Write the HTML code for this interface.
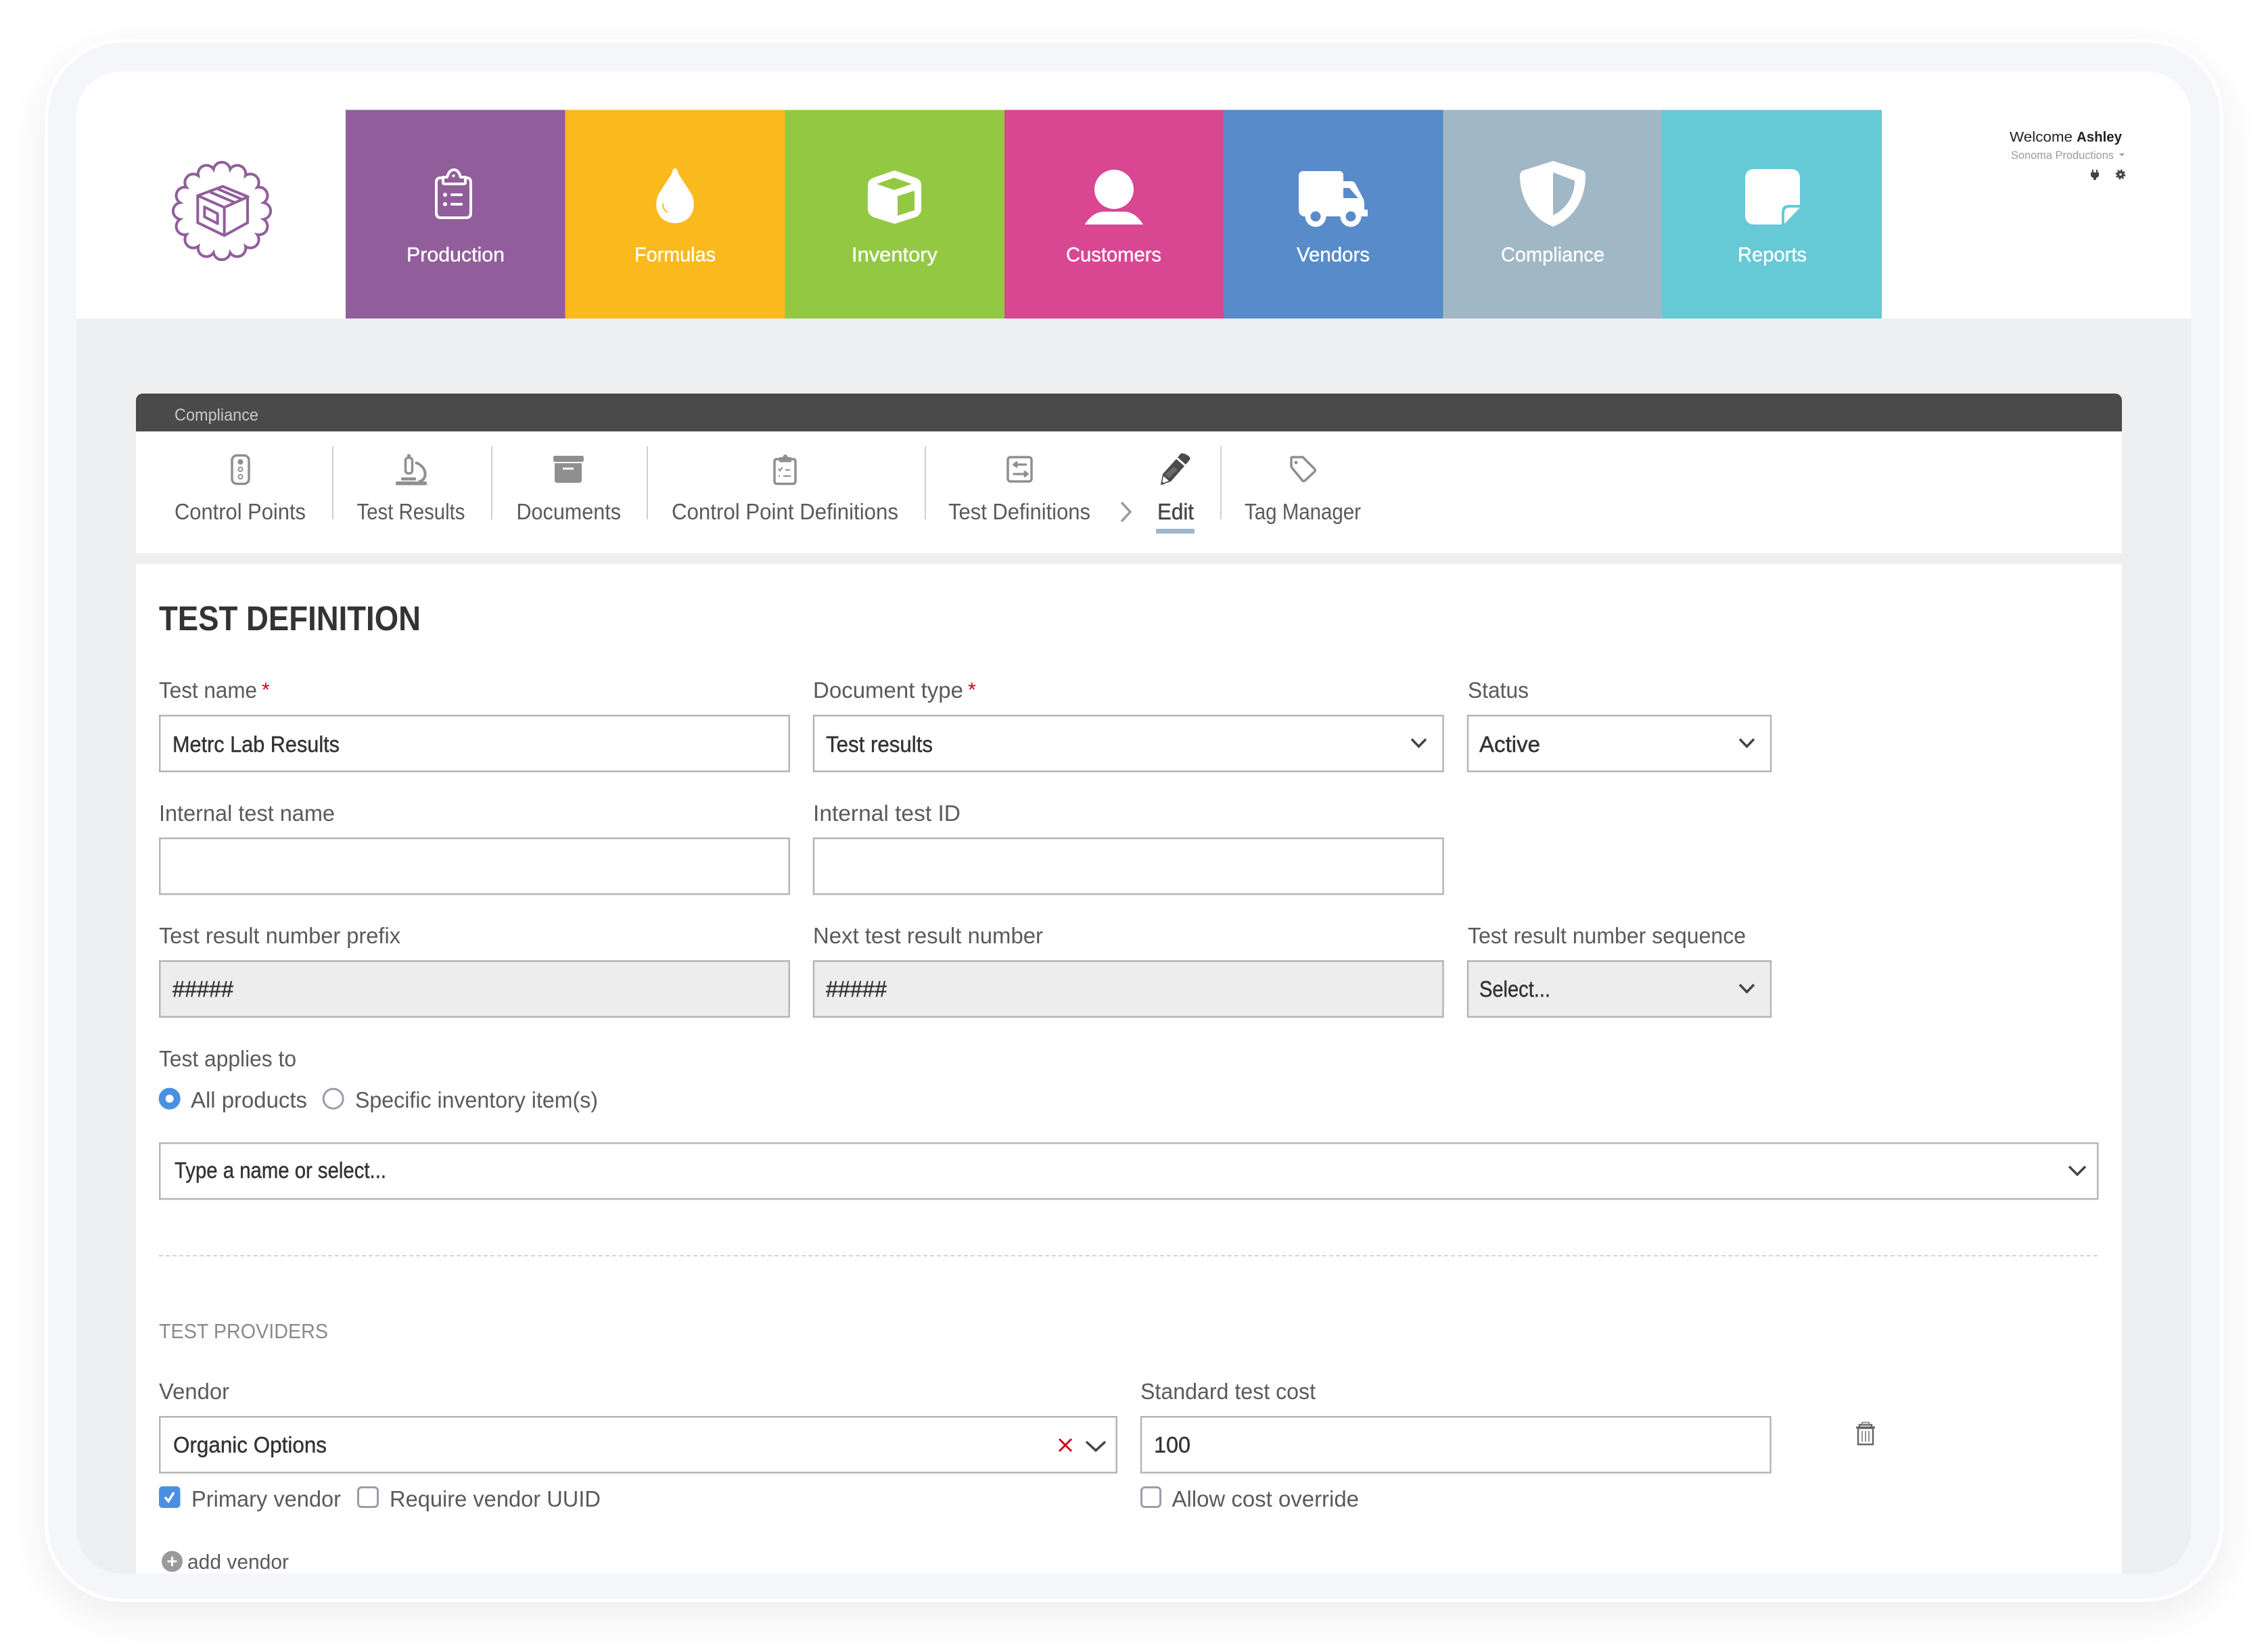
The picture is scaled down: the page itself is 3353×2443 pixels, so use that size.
<!DOCTYPE html>
<html><head><meta charset="utf-8"><title>Test Definition</title>
<style>
html,body{margin:0;padding:0;background:#fff;width:3353px;height:2443px;overflow:hidden}
#f{position:absolute;left:66px;top:58px;width:3211px;height:2301px;border:5px solid #fff;border-radius:115px;background:#f4f6fa;box-shadow:0 20px 60px rgba(0,0,0,.075)}
svg{position:absolute;left:0;top:0}
text{font-family:"Liberation Sans",sans-serif;font-size:33px;fill:#5a5a5a}
.n{font-size:30px;fill:#fff;stroke:#fff;stroke-width:.4;text-anchor:start}
.v{fill:#333;stroke:#333;stroke-width:.45}
.i{fill:none;stroke:#8f8f8f;stroke-width:3.5;stroke-linejoin:round;stroke-linecap:round}
.g{fill:#8f8f8f}
.c{fill:none;stroke:#444;stroke-width:3.5}
.b{fill:#fff;stroke:#b5b5b5;stroke-width:2.5}
.d{fill:#ededed;stroke:#b5b5b5;stroke-width:2.5}
</style></head><body>
<div id="f"></div>
<svg width="3353" height="2443" viewBox="0 0 3353 2443" xmlns="http://www.w3.org/2000/svg">
<!-- screen -->
<path d="M113 471V171a65 65 0 0 1 65-65H3174a65 65 0 0 1 65 65V471Z" fill="#fff"/>
<path d="M113 471H3239V2262a65 65 0 0 1-65 65H178a65 65 0 0 1-65-65Z" fill="#eeeff1"/>

<!-- logo -->
<g transform="translate(328 312)" fill="none" stroke="#915e9b" stroke-width="4">
<path d="M12.3-61.8A12.5 12.5 0 0 1 35-52.4A12.5 12.5 0 0 1 52.4-35A12.5 12.5 0 0 1 61.8-12.3A12.5 12.5 0 0 1 61.8 12.3A12.5 12.5 0 0 1 52.4 35A12.5 12.5 0 0 1 35 52.4A12.5 12.5 0 0 1 12.3 61.8A12.5 12.5 0 0 1-12.3 61.8A12.5 12.5 0 0 1-35 52.4A12.5 12.5 0 0 1-52.4 35A12.5 12.5 0 0 1-61.8 12.3A12.5 12.5 0 0 1-61.8-12.3A12.5 12.5 0 0 1-52.4-35A12.5 12.5 0 0 1-35-52.4A12.5 12.5 0 0 1-12.3-61.8A12.5 12.5 0 0 1 12.3-61.8Z"/>
</g>
<g transform="translate(220 210) scale(.3333)" fill="none" stroke="#915e9b" stroke-width="12" stroke-linejoin="round">
<path d="M328 197L440 243L335 290L217 238Z"/>
<path d="M217 238V358L335 415L438 358V243M335 290V415"/>
<path d="M272 222L380 268M305 208L415 255"/>
<path d="M247 288L305 318V362L247 332Z"/>
</g>

<!-- main nav -->
<rect x="511" y="162.5" width="324.5" height="308.5" fill="#915e9b"/>
<rect x="835.5" y="162.5" width="325" height="308.5" fill="#fab91c"/>
<rect x="1160.5" y="162.5" width="324.5" height="308.5" fill="#93c942"/>
<rect x="1485" y="162.5" width="324" height="308.5" fill="#d94692"/>
<rect x="1809" y="162.5" width="324.5" height="308.5" fill="#578bc9"/>
<rect x="2133.5" y="162.5" width="323.5" height="308.5" fill="#a0b7c6"/>
<rect x="2457" y="162.5" width="325" height="308.5" fill="#66c9d6"/>
<text class="n" x="601" y="386.5" textLength="145" lengthAdjust="spacingAndGlyphs">Production</text>
<text class="n" x="938" y="386.5" textLength="120" lengthAdjust="spacingAndGlyphs">Formulas</text>
<text class="n" x="1259" y="386.5" textLength="127" lengthAdjust="spacingAndGlyphs">Inventory</text>
<text class="n" x="1576" y="386.5" textLength="141" lengthAdjust="spacingAndGlyphs">Customers</text>
<text class="n" x="1917" y="386.5" textLength="108" lengthAdjust="spacingAndGlyphs">Vendors</text>
<text class="n" x="2219" y="386.5" textLength="153" lengthAdjust="spacingAndGlyphs">Compliance</text>
<text class="n" x="2569" y="386.5" textLength="102" lengthAdjust="spacingAndGlyphs">Reports</text>

<!-- production icon -->
<g fill="none" stroke="#fff" stroke-width="4" stroke-linejoin="round">
<path d="M655 263H651Q645 263 645 270V315Q645 322 652 322H689Q696 322 696 315V270Q696 263 690 263H688"/>
<path d="M655 262V270Q655 272 658 272H685Q688 272 688 270V262H681Q678 251 671 251Q664 251 661 262Z"/>
</g>
<circle cx="670.500" cy="260" r="2" fill="#fff"/>
<g fill="#fff"><circle cx="658" cy="288" r="3"/><circle cx="658" cy="302" r="3"/><rect x="666" y="286" width="18" height="4" rx="2"/><rect x="666" y="300" width="18" height="4" rx="2"/></g>
<!-- drop -->
<path d="M998 249C1001 249 1002 253 1003 257L1023 288C1032 312 1018 330 998 330C978 330 964 312 973 288L993 257C994 253 995 249 998 249Z" fill="#fff"/>
<path d="M980 301C980 308 983 312 987 314" fill="none" stroke="#fab91c" stroke-width="2"/>
<!-- inventory -->
<path d="M1322.500 252L1354 263Q1362 266 1362 274V309Q1362 317 1354 321L1322.500 331L1291 321Q1283 317 1283 309V274Q1283 266 1291 263Z" fill="#fff"/>
<path d="M1322 262.700L1348 272L1322 281L1296 272Z" fill="#93c942"/>
<path d="M1327 290L1352 282V311L1327 319Z" fill="#93c942"/>
<!-- customer -->
<circle cx="1647" cy="280" r="29" fill="#fff"/>
<path d="M1603.500 332Q1616 313 1632 313H1662Q1678 313 1690 332Z" fill="#fff"/>
<!-- truck -->
<path d="M1920 260Q1920 253 1927 253H1980Q1986 253 1986 260V268H1998Q2002 268 2004 272L2014 291Q2017 296 2017 302V310H2022V320H1930Q1920 320 1920 310Z" fill="#fff"/>
<path d="M1986 278H1995L2008 293H1986Z" fill="#578bc9"/>
<circle cx="1945" cy="320" r="15.500" fill="#fff"/><circle cx="1945" cy="320" r="7.500" fill="#578bc9"/>
<circle cx="1997" cy="320" r="15.500" fill="#fff"/><circle cx="1997" cy="320" r="7.500" fill="#578bc9"/>
<!-- shield -->
<path d="M2296 238L2340 252Q2344 254 2344 260C2344 290 2330 322 2296 335C2262 322 2247 290 2247 260Q2247 254 2252 252Z" fill="#fff"/>
<path d="M2296 255L2328 267C2328 290 2315 310 2296 318Z" fill="#a0b7c6"/>
<!-- reports -->
<path d="M2594 250H2647Q2661 250 2661 264V303H2645Q2634 303 2634 314V332H2594Q2580 332 2580 318V264Q2580 250 2594 250Z" fill="#fff"/>
<path d="M2645 307H2661L2638 331V316Q2638 307 2645 307Z" fill="#fff"/>

<!-- welcome -->
<text x="2971" y="209.500" style="font-size:21px;fill:#222" textLength="93" lengthAdjust="spacingAndGlyphs">Welcome</text>
<text x="3070" y="209.500" style="font-size:21px;fill:#222;font-weight:bold" textLength="67" lengthAdjust="spacingAndGlyphs">Ashley</text>
<text x="2973" y="235" style="font-size:17px;fill:#9a9a9a" textLength="152" lengthAdjust="spacingAndGlyphs">Sonoma Productions</text>
<path d="M3133 227H3141L3137 231Z" fill="#9a9a9a"/>
<path d="M3094 251V256M3100 251V256" stroke="#444" stroke-width="2"/>
<path d="M3091 255H3103V259Q3103 262 3099 263V266H3095V263Q3091 262 3091 259Z" fill="#444"/>
<circle cx="3135" cy="258" r="5.500" fill="#444"/>
<circle cx="3135" cy="258" r="6.500" fill="none" stroke="#444" stroke-width="1.800" stroke-dasharray="2.600 2.500"/>
<circle cx="3135" cy="258" r="1.800" fill="#fff"/>

<!-- dark bar + tabs panel -->
<path d="M201 638V592a10 10 0 0 1 10-10H3127a10 10 0 0 1 10 10V638Z" fill="#4a4a4a"/>
<text x="258" y="622" style="font-size:25px;fill:#c8c8c8" textLength="124" lengthAdjust="spacingAndGlyphs">Compliance</text>
<rect x="201" y="638" width="2936" height="180" fill="#fff"/>
<rect x="201" y="834" width="2936" height="1493" fill="#fff"/>

<!-- tab dividers -->
<g fill="#cfcfcf"><rect x="491" y="660" width="2" height="108"/><rect x="726" y="660" width="2" height="108"/><rect x="956" y="660" width="2" height="108"/><rect x="1367" y="660" width="2" height="108"/><rect x="1804" y="660" width="2" height="108"/></g>
<text x="258" y="768" textLength="194" lengthAdjust="spacingAndGlyphs">Control Points</text>
<text x="527.500" y="768" textLength="160" lengthAdjust="spacingAndGlyphs">Test Results</text>
<text x="763.500" y="768" textLength="154.500" lengthAdjust="spacingAndGlyphs">Documents</text>
<text x="993" y="768" textLength="335" lengthAdjust="spacingAndGlyphs">Control Point Definitions</text>
<text x="1402" y="768" textLength="210" lengthAdjust="spacingAndGlyphs">Test Definitions</text>
<text x="1711" y="768" style="fill:#444;stroke:#444;stroke-width:.4" textLength="54" lengthAdjust="spacingAndGlyphs">Edit</text>
<text x="1840" y="768" textLength="172" lengthAdjust="spacingAndGlyphs">Tag Manager</text>
<path d="M1658 743L1671 757L1658 771" fill="none" stroke="#9c9c9c" stroke-width="3.500"/>
<rect x="1709" y="782" width="57" height="7" fill="#9fb7cb"/>

<!-- control points icon -->
<rect x="343" y="673.500" width="25" height="42" rx="7" class="i"/>
<circle cx="355.500" cy="683" r="4" class="g"/><circle cx="355.500" cy="694" r="3" class="i" style="stroke-width:2"/><circle cx="355.500" cy="705" r="3" class="i" style="stroke-width:2"/>
<!-- microscope -->
<rect x="585" y="712" width="46" height="5.500" rx="2" class="g"/><rect x="593" y="706" width="22" height="4.500" rx="1.500" class="g"/>
<rect x="599.500" y="677" width="10" height="23" rx="4" class="i"/><rect x="602" y="671.500" width="5" height="5" rx="2" class="g"/>
<path d="M614 684C633 690 632 711 619 712" fill="none" stroke="#8f8f8f" stroke-width="4"/>
<!-- documents -->
<rect x="818" y="674" width="45" height="9" rx="2.500" class="g"/>
<path d="M820 685H860V710Q860 714 856 714H824Q820 714 820 710Z" class="g"/>
<rect x="832" y="691.500" width="16" height="3" fill="#fff"/>
<!-- cp definitions clipboard -->
<path d="M1152 679H1148Q1145 679 1145 683V711Q1145 715.500 1149 715.500H1172Q1176 715.500 1176 711V683Q1176 679 1173 679H1169" class="i"/>
<path d="M1152 676H1157Q1159 672 1161 672Q1163 672 1165 676H1170V682Q1170 683.500 1168 683.500H1154Q1152 683.500 1152 682Z" class="g"/>
<path d="M1151 693L1153 696L1157 691M1151 704H1153M1161 695H1168M1158 704H1169" fill="none" stroke="#8f8f8f" stroke-width="2"/>
<!-- test definitions -->
<rect x="1490" y="676" width="35" height="36" rx="4" class="i"/>
<path d="M1518 687H1499M1504 683L1499 687L1504 691M1497.500 701H1519M1514 697L1519 701L1514 705" fill="none" stroke="#8f8f8f" stroke-width="3.200"/>
<!-- pencil -->
<path d="M1741 676.400L1746 670.400Q1752 670 1758 675Q1761 678 1758 681L1753 687Z" fill="#4a4a4a"/>
<path d="M1739 678.700L1751 689.300L1731 712L1716 717L1719 701Z" fill="#4a4a4a"/>
<path d="M1735 690L1741 695L1728 707L1722 702Z" fill="#fff" opacity=".18"/>
<path d="M1720 704L1728 711L1718 715Z" fill="#fff"/><path d="M1716 717L1717 711L1722 716Z" fill="#4a4a4a"/>
<!-- tag -->
<path d="M1911 676H1925Q1927 676 1928 678L1943 693Q1945 695 1944 697L1930 710Q1927 713 1925 710L1911 693Q1909 691 1909 689V678Q1909 676 1911 676Z" class="i"/>
<circle cx="1916" cy="684" r="2.500" class="g"/>

<!-- form -->
<text x="235" y="932" style="font-size:51px;font-weight:bold;fill:#333" textLength="387" lengthAdjust="spacingAndGlyphs">TEST DEFINITION</text>

<text x="235" y="1032" textLength="145" lengthAdjust="spacingAndGlyphs">Test name</text>
<text x="387" y="1030" style="font-size:30px;fill:#d0021b">*</text>
<text x="1202" y="1032" textLength="222" lengthAdjust="spacingAndGlyphs">Document type</text>
<text x="1431" y="1030" style="font-size:30px;fill:#d0021b">*</text>
<text x="2170" y="1032" textLength="90" lengthAdjust="spacingAndGlyphs">Status</text>

<rect x="236.250" y="1058.250" width="930.500" height="82.500" class="b"/>
<rect x="1203" y="1058.250" width="930.500" height="82.500" class="b"/>
<rect x="2170" y="1058.250" width="448" height="82.500" class="b"/>
<text class="v" x="255" y="1112" textLength="247" lengthAdjust="spacingAndGlyphs">Metrc Lab Results</text>
<text class="v" x="1221" y="1112" textLength="158" lengthAdjust="spacingAndGlyphs">Test results</text>
<text class="v" x="2187" y="1112" textLength="90" lengthAdjust="spacingAndGlyphs">Active</text>
<path class="c" d="M2087 1093L2097.500 1104L2108 1093"/>
<path class="c" d="M2572 1093L2582.500 1104L2593 1093"/>

<text x="235" y="1214" textLength="260" lengthAdjust="spacingAndGlyphs">Internal test name</text>
<text x="1202" y="1214" textLength="218" lengthAdjust="spacingAndGlyphs">Internal test ID</text>
<rect x="236.250" y="1239.750" width="930.500" height="82.500" class="b"/>
<rect x="1203" y="1239.750" width="930.500" height="82.500" class="b"/>

<text x="235" y="1395" textLength="357" lengthAdjust="spacingAndGlyphs">Test result number prefix</text>
<text x="1202" y="1395" textLength="340" lengthAdjust="spacingAndGlyphs">Next test result number</text>
<text x="2170" y="1395" textLength="411" lengthAdjust="spacingAndGlyphs">Test result number sequence</text>
<rect x="236.250" y="1421.250" width="930.500" height="82.500" class="d"/>
<rect x="1203" y="1421.250" width="930.500" height="82.500" class="d"/>
<rect x="2170" y="1421.250" width="448" height="82.500" class="d"/>
<text class="v" x="255" y="1474" textLength="90" lengthAdjust="spacingAndGlyphs">#####</text>
<text class="v" x="1221" y="1474" textLength="90" lengthAdjust="spacingAndGlyphs">#####</text>
<text class="v" x="2187" y="1474" textLength="105" lengthAdjust="spacingAndGlyphs">Select...</text>
<path class="c" d="M2572 1456L2582.500 1467L2593 1456"/>

<text x="235" y="1577" textLength="203" lengthAdjust="spacingAndGlyphs">Test applies to</text>
<circle cx="250.700" cy="1624.700" r="11" fill="#fff" stroke="#4a90e2" stroke-width="10"/>
<circle cx="492.700" cy="1624.700" r="14.500" fill="#fff" stroke="#9c9cab" stroke-width="3"/>
<text x="282" y="1638" textLength="172" lengthAdjust="spacingAndGlyphs">All products</text>
<text x="525" y="1638" textLength="359" lengthAdjust="spacingAndGlyphs">Specific inventory item(s)</text>

<rect x="236.250" y="1690.500" width="2865" height="82.500" class="b"/>
<text class="v" x="258" y="1742" textLength="313" lengthAdjust="spacingAndGlyphs">Type a name or select...</text>
<path class="c" d="M3059 1725L3071 1737L3083 1725"/>

<line x1="235" y1="1857" x2="3102" y2="1857" stroke="#d4d4d4" stroke-width="2" stroke-dasharray="6 4"/>

<text x="235" y="1979" style="fill:#8a8a8a;font-size:31px" textLength="250" lengthAdjust="spacingAndGlyphs">TEST PROVIDERS</text>

<text x="235" y="2069" textLength="104" lengthAdjust="spacingAndGlyphs">Vendor</text>
<text x="1686" y="2069" textLength="259" lengthAdjust="spacingAndGlyphs">Standard test cost</text>
<rect x="236.250" y="2095.250" width="1414.500" height="82.500" class="b"/>
<rect x="1687" y="2095.250" width="930.500" height="82.500" class="b"/>
<text class="v" x="256" y="2148" textLength="227" lengthAdjust="spacingAndGlyphs">Organic Options</text>
<text class="v" x="1706" y="2148" textLength="54" lengthAdjust="spacingAndGlyphs">100</text>
<path d="M1566 2128L1584 2146M1584 2128L1566 2146" stroke="#d0021b" stroke-width="3" fill="none"/>
<path class="c" d="M1606 2132L1620 2145L1634 2132"/>
<path d="M2747 2112H2769V2136H2747ZM2749 2107H2767V2112H2749Z" fill="none" stroke="#666" stroke-width="2.500"/>
<path d="M2753 2103.500H2763V2107H2753ZM2753 2116V2132M2758 2116V2132M2763 2116V2132" fill="none" stroke="#777" stroke-width="1.600"/>
<path d="M2744 2111H2772" stroke="#666" stroke-width="3"/>

<rect x="235" y="2198" width="31.500" height="32" rx="5" fill="#4a90e2"/>
<path d="M244 2214L249 2220L257 2207" fill="none" stroke="#fff" stroke-width="3.500"/>
<rect x="529.500" y="2199.500" width="29" height="29" rx="5" fill="#fff" stroke="#9c9cab" stroke-width="3"/>
<rect x="1687.500" y="2199.500" width="28" height="29" rx="5" fill="#fff" stroke="#9c9cab" stroke-width="3"/>
<text x="283" y="2228" textLength="221" lengthAdjust="spacingAndGlyphs">Primary vendor</text>
<text x="576" y="2228" textLength="312" lengthAdjust="spacingAndGlyphs">Require vendor UUID</text>
<text x="1732.500" y="2228" textLength="276.500" lengthAdjust="spacingAndGlyphs">Allow cost override</text>

<circle cx="254.500" cy="2309" r="15.500" fill="#9a9a9a"/>
<path d="M247.500 2309H261.500M254.500 2302V2316" stroke="#fff" stroke-width="3"/>
<text x="277" y="2320" style="font-size:31px" textLength="150" lengthAdjust="spacingAndGlyphs">add vendor</text>
</svg>
</body></html>
